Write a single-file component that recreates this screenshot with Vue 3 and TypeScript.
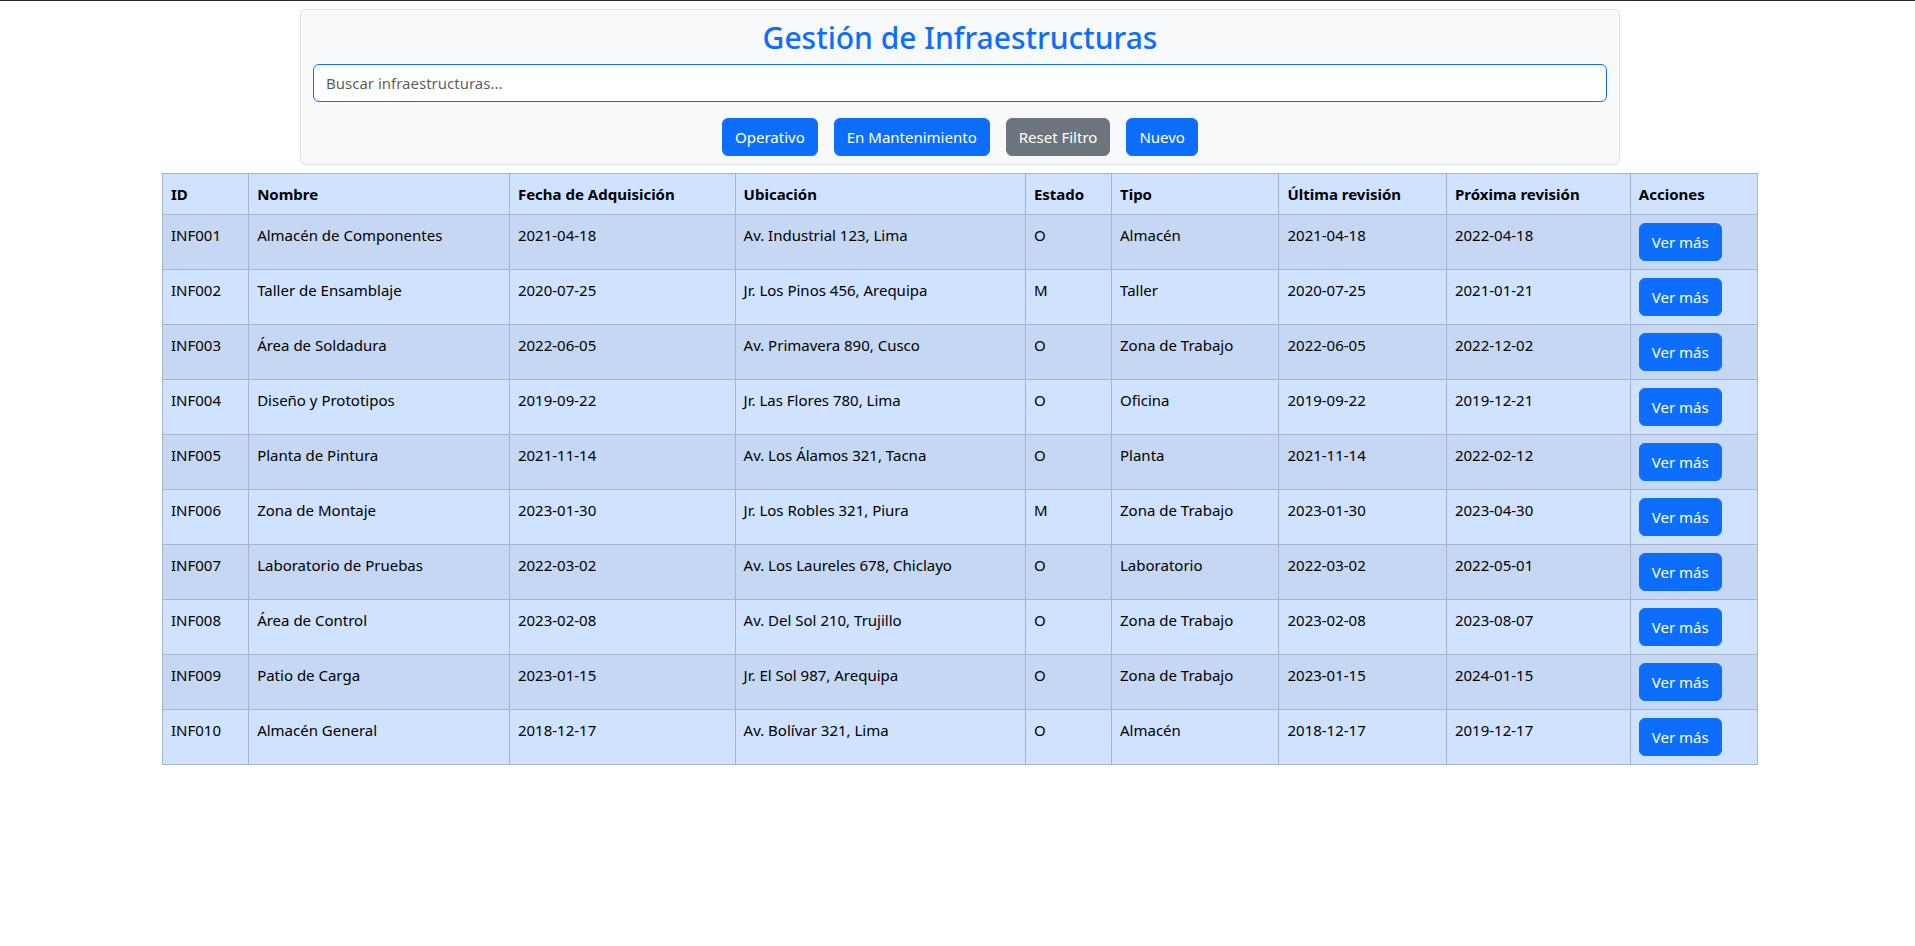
<script setup lang="ts">
import { computed, ref } from 'vue'

interface Infraestructura {
  id: string
  nombre: string
  adquisicion: string
  ubicacion: string
  estado: 'O' | 'M'
  tipo: string
  ultima: string
  proxima: string
}

const items: Infraestructura[] = [
  { id: 'INF001', nombre: 'Almacén de Componentes', adquisicion: '2021-04-18', ubicacion: 'Av. Industrial 123, Lima', estado: 'O', tipo: 'Almacén', ultima: '2021-04-18', proxima: '2022-04-18' },
  { id: 'INF002', nombre: 'Taller de Ensamblaje', adquisicion: '2020-07-25', ubicacion: 'Jr. Los Pinos 456, Arequipa', estado: 'M', tipo: 'Taller', ultima: '2020-07-25', proxima: '2021-01-21' },
  { id: 'INF003', nombre: 'Área de Soldadura', adquisicion: '2022-06-05', ubicacion: 'Av. Primavera 890, Cusco', estado: 'O', tipo: 'Zona de Trabajo', ultima: '2022-06-05', proxima: '2022-12-02' },
  { id: 'INF004', nombre: 'Diseño y Prototipos', adquisicion: '2019-09-22', ubicacion: 'Jr. Las Flores 780, Lima', estado: 'O', tipo: 'Oficina', ultima: '2019-09-22', proxima: '2019-12-21' },
  { id: 'INF005', nombre: 'Planta de Pintura', adquisicion: '2021-11-14', ubicacion: 'Av. Los Álamos 321, Tacna', estado: 'O', tipo: 'Planta', ultima: '2021-11-14', proxima: '2022-02-12' },
  { id: 'INF006', nombre: 'Zona de Montaje', adquisicion: '2023-01-30', ubicacion: 'Jr. Los Robles 321, Piura', estado: 'M', tipo: 'Zona de Trabajo', ultima: '2023-01-30', proxima: '2023-04-30' },
  { id: 'INF007', nombre: 'Laboratorio de Pruebas', adquisicion: '2022-03-02', ubicacion: 'Av. Los Laureles 678, Chiclayo', estado: 'O', tipo: 'Laboratorio', ultima: '2022-03-02', proxima: '2022-05-01' },
  { id: 'INF008', nombre: 'Área de Control', adquisicion: '2023-02-08', ubicacion: 'Av. Del Sol 210, Trujillo', estado: 'O', tipo: 'Zona de Trabajo', ultima: '2023-02-08', proxima: '2023-08-07' },
  { id: 'INF009', nombre: 'Patio de Carga', adquisicion: '2023-01-15', ubicacion: 'Jr. El Sol 987, Arequipa', estado: 'O', tipo: 'Zona de Trabajo', ultima: '2023-01-15', proxima: '2024-01-15' },
  { id: 'INF010', nombre: 'Almacén General', adquisicion: '2018-12-17', ubicacion: 'Av. Bolívar 321, Lima', estado: 'O', tipo: 'Almacén', ultima: '2018-12-17', proxima: '2019-12-17' },
]

const busqueda = ref('')
const filtro = ref<'O' | 'M' | null>(null)

const visibles = computed(() => {
  const texto = busqueda.value.trim().toLowerCase()
  return items.filter(
    (i) =>
      (filtro.value === null || i.estado === filtro.value) &&
      Object.values(i).some((v) => v.toLowerCase().includes(texto)),
  )
})

function resetFiltro() {
  filtro.value = null
  busqueda.value = ''
}
</script>

<template>
  <main class="page">
    <section class="panel">
      <h2 class="title">Gestión de Infraestructuras</h2>
      <input
        v-model="busqueda"
        class="search"
        type="text"
        placeholder="Buscar infraestructuras..."
        aria-label="Buscar infraestructuras"
      />
      <div class="actions">
        <button class="btn" type="button" @click="filtro = 'O'">Operativo</button>
        <button class="btn" type="button" @click="filtro = 'M'">En Mantenimiento</button>
        <button class="btn btn-secondary" type="button" @click="resetFiltro">Reset Filtro</button>
        <button class="btn" type="button">Nuevo</button>
      </div>
    </section>

    <div class="table-wrap">
      <table class="table">
        <colgroup>
          <col class="col-id" />
          <col class="col-nombre" />
          <col class="col-fecha" />
          <col class="col-ubicacion" />
          <col class="col-estado" />
          <col class="col-tipo" />
          <col class="col-ultima" />
          <col class="col-proxima" />
          <col class="col-acciones" />
        </colgroup>
        <thead>
          <tr>
            <th scope="col">ID</th>
            <th scope="col">Nombre</th>
            <th scope="col">Fecha de Adquisición</th>
            <th scope="col">Ubicación</th>
            <th scope="col">Estado</th>
            <th scope="col">Tipo</th>
            <th scope="col">Última revisión</th>
            <th scope="col">Próxima revisión</th>
            <th scope="col">Acciones</th>
          </tr>
        </thead>
        <tbody>
          <tr v-for="i in visibles" :key="i.id">
            <td>{{ i.id }}</td>
            <td>{{ i.nombre }}</td>
            <td>{{ i.adquisicion }}</td>
            <td>{{ i.ubicacion }}</td>
            <td>{{ i.estado }}</td>
            <td>{{ i.tipo }}</td>
            <td>{{ i.ultima }}</td>
            <td>{{ i.proxima }}</td>
            <td><button class="btn" type="button">Ver más</button></td>
          </tr>
        </tbody>
      </table>
    </div>
  </main>
</template>

<style>
body {
  margin: 0;
  background: #fff;
}
</style>

<style scoped>
.page {
  box-sizing: border-box;
  padding: 8px 0 8px 5px;
  border-top: 1px solid #2b2a33;
  color: #000;
  font-family: 'Segoe UI', 'Noto Sans', 'Open Sans', sans-serif;
  font-size: 15px;
  line-height: 24px;
}

.panel {
  box-sizing: border-box;
  max-width: 1320px;
  margin: 0 auto 8px;
  padding: 8px 12px;
  border: 1px solid #dee2e6;
  border-radius: 6px;
  background: #f8f9fa;
}

.title {
  margin: 0 0 6px;
  color: #0d6efd;
  font-size: 30px;
  font-weight: 500;
  line-height: 40px;
  text-align: center;
}

.search {
  display: block;
  box-sizing: border-box;
  width: 100%;
  height: 38px;
  margin: 0 0 16px;
  padding: 6px 12px;
  border: 1px solid #0d6efd;
  border-radius: 6px;
  background: #fff;
  color: #212529;
  font: inherit;
}

.search::placeholder {
  color: rgba(33, 37, 41, 0.75);
  opacity: 1;
}

.actions {
  display: flex;
  flex-wrap: wrap;
  justify-content: center;
  gap: 16px;
}

.btn {
  display: block;
  padding: 6px 12px;
  border: 1px solid #0d6efd;
  border-radius: 6px;
  background: #0d6efd;
  color: #fff;
  font: inherit;
  cursor: pointer;
}

.btn-secondary {
  border-color: #6c757d;
  background: #6c757d;
}

.table-wrap {
  padding: 0 157px;
}

.table {
  width: 100%;
  border-collapse: collapse;
  table-layout: fixed;
}

.table th,
.table td {
  padding: 8px;
  border: 1px solid #a6b5cc;
  background: #cfe2ff;
  text-align: left;
  vertical-align: top;
}

.table th {
  font-weight: 700;
}

.table tbody tr:nth-child(odd) td {
  background: #c5d7f2;
}

.col-id,
.col-estado {
  width: 5.4%;
}

.col-nombre {
  width: 16.35%;
}

.col-fecha {
  width: 14.15%;
}

.col-ubicacion {
  width: 18.2%;
}

.col-tipo,
.col-ultima {
  width: 10.5%;
}

.col-proxima {
  width: 11.53%;
}

.col-acciones {
  width: 7.97%;
}
</style>
